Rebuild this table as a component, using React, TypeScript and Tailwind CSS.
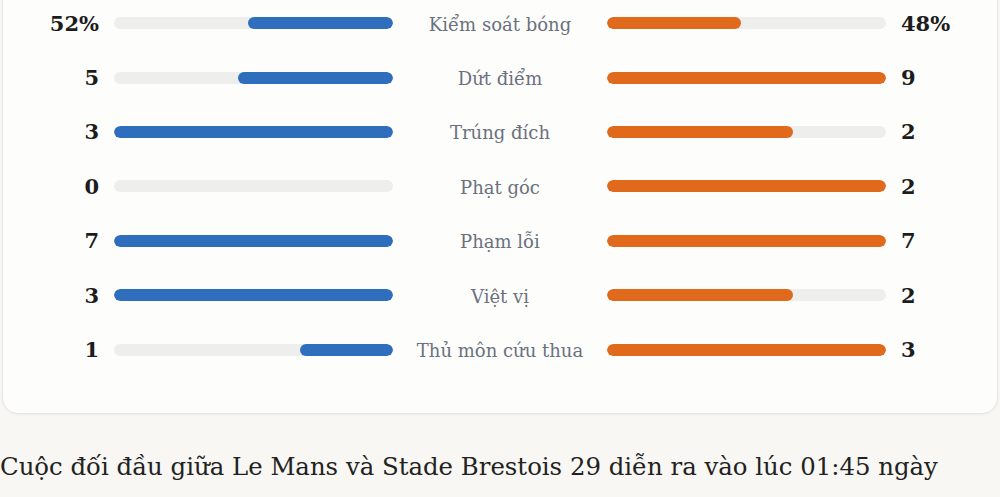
import React from 'react';

interface StatRow {
  label: string;
  home: number;
  away: number;
  suffix?: string;
}

const stats: StatRow[] = [
  { label: 'Kiểm soát bóng', home: 52, away: 48, suffix: '%' },
  { label: 'Dứt điểm', home: 5, away: 9 },
  { label: 'Trúng đích', home: 3, away: 2 },
  { label: 'Phạt góc', home: 0, away: 2 },
  { label: 'Phạm lỗi', home: 7, away: 7 },
  { label: 'Việt vị', home: 3, away: 2 },
  { label: 'Thủ môn cứu thua', home: 1, away: 3 },
];

function getShare(value: number, row: StatRow): number {
  if (row.suffix === '%') return value;
  const max = Math.max(row.home, row.away);
  if (max === 0) return 0;
  return (value / max) * 100;
}

const serif = { fontFamily: '"DejaVu Serif", "Liberation Serif", serif' };

const App: React.FC = () => {
  return (
    <div className="min-h-screen bg-[#f8f7f3] overflow-hidden" style={serif}>
      {/* Stats card */}
      <div className="mx-[2px] -mt-[25px] pt-[20px] pb-[36px] bg-[#fdfdfc] border border-[#e6e6e2] rounded-2xl shadow-[0_1px_2px_rgba(0,0,0,0.04)]">
        {stats.map((row) => (
          <div
            key={row.label}
            className="grid grid-cols-[96px_279px_1fr_279px_96px] gap-x-[15px] items-center h-[54.4px]"
          >
            <span className="text-right text-[21px] font-bold text-[#1c1c1c] leading-none">
              {row.home}
              {row.suffix}
            </span>
            <div className="h-[12px] rounded-full bg-[#eeefec] flex justify-end overflow-hidden">
              <div
                className="h-full rounded-full bg-[#2f6ebd]"
                style={{ width: `${getShare(row.home, row)}%` }}
              />
            </div>
            <span className="text-center text-[18px] text-[#6b717c] leading-none whitespace-nowrap pt-[3px]">
              {row.label}
            </span>
            <div className="h-[12px] rounded-full bg-[#eeefec] flex overflow-hidden">
              <div
                className="h-full rounded-full bg-[#e0691c]"
                style={{ width: `${getShare(row.away, row)}%` }}
              />
            </div>
            <span className="text-left text-[21px] font-bold text-[#1c1c1c] leading-none">
              {row.away}
              {row.suffix}
            </span>
          </div>
        ))}
      </div>

      {/* Article text */}
      <p className="mt-[35px] text-[24.4px] leading-[36px] text-[#222222] whitespace-nowrap">
        Cuộc đối đầu giữa Le Mans và Stade Brestois 29 diễn ra vào lúc 01:45 ngày
      </p>
    </div>
  );
};

export default App;
